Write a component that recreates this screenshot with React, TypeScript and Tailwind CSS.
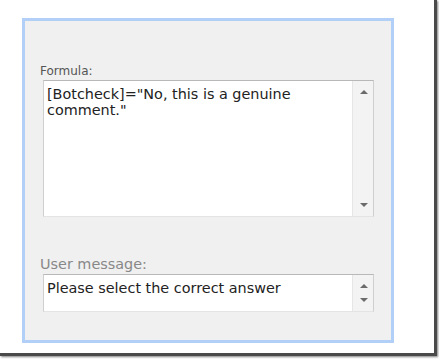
import React from "react";

function Up() {
  return (
    <svg width="8" height="4" viewBox="0 0 8 4" className="block">
      <polygon points="0,4 4,0 8,4" fill="#6b6b6b" />
    </svg>
  );
}
function Down() {
  return (
    <svg width="8" height="4" viewBox="0 0 8 4" className="block">
      <polygon points="0,0 8,0 4,4" fill="#6b6b6b" />
    </svg>
  );
}

function Scroll() {
  return (
    <div className="w-[21px] shrink-0 border-l border-[#e6e6e6] bg-[#f3f3f3] flex flex-col items-center justify-between py-[9px] pl-[1px]">
      <Up />
      <Down />
    </div>
  );
}

export default function App() {
  return (
    <div className="w-[439px] h-[359px] bg-white" style={{ fontFamily: '"DejaVu Sans", Verdana, sans-serif' }}>
      <div className="w-[437px] h-[356px] border-r-[3px] border-b-[3px] border-[#4a4a4a] shadow-[1px_1px_2px_rgba(0,0,0,0.5)] pl-[22px] pt-[18px]">
        <div className="w-[372px] h-[325px] border-[3px] border-[#b2cff7] bg-[#f0f0f0] pl-[18px] pr-[17px] pt-[41px] flex flex-col">
          <div className="text-[12px] leading-[18px] text-[#555] -ml-[3px]">Formula:</div>
          <div className="h-[137px] flex border border-[#cfcfcf] border-t-[#b8b8b8] border-b-[#e4e4e4] bg-white">
            <div className="flex-1 px-[3px] pt-[5px] text-[14.4px] leading-[16px] text-[#222]">
              [Botcheck]="No, this is a genuine comment."
            </div>
            <Scroll />
          </div>
          <div className="mt-[37px] text-[14.4px] leading-[20px] text-[#888] -ml-[3px]">User message:</div>
          <div className="h-[38px] flex border border-[#cfcfcf] border-t-[#b8b8b8] border-b-[#e4e4e4] bg-white">
            <div className="flex-1 px-[3px] pt-[5px] text-[14.4px] leading-[16px] text-[#222]">
              Please select the correct answer
            </div>
            <Scroll />
          </div>
        </div>
      </div>
    </div>
  );
}
